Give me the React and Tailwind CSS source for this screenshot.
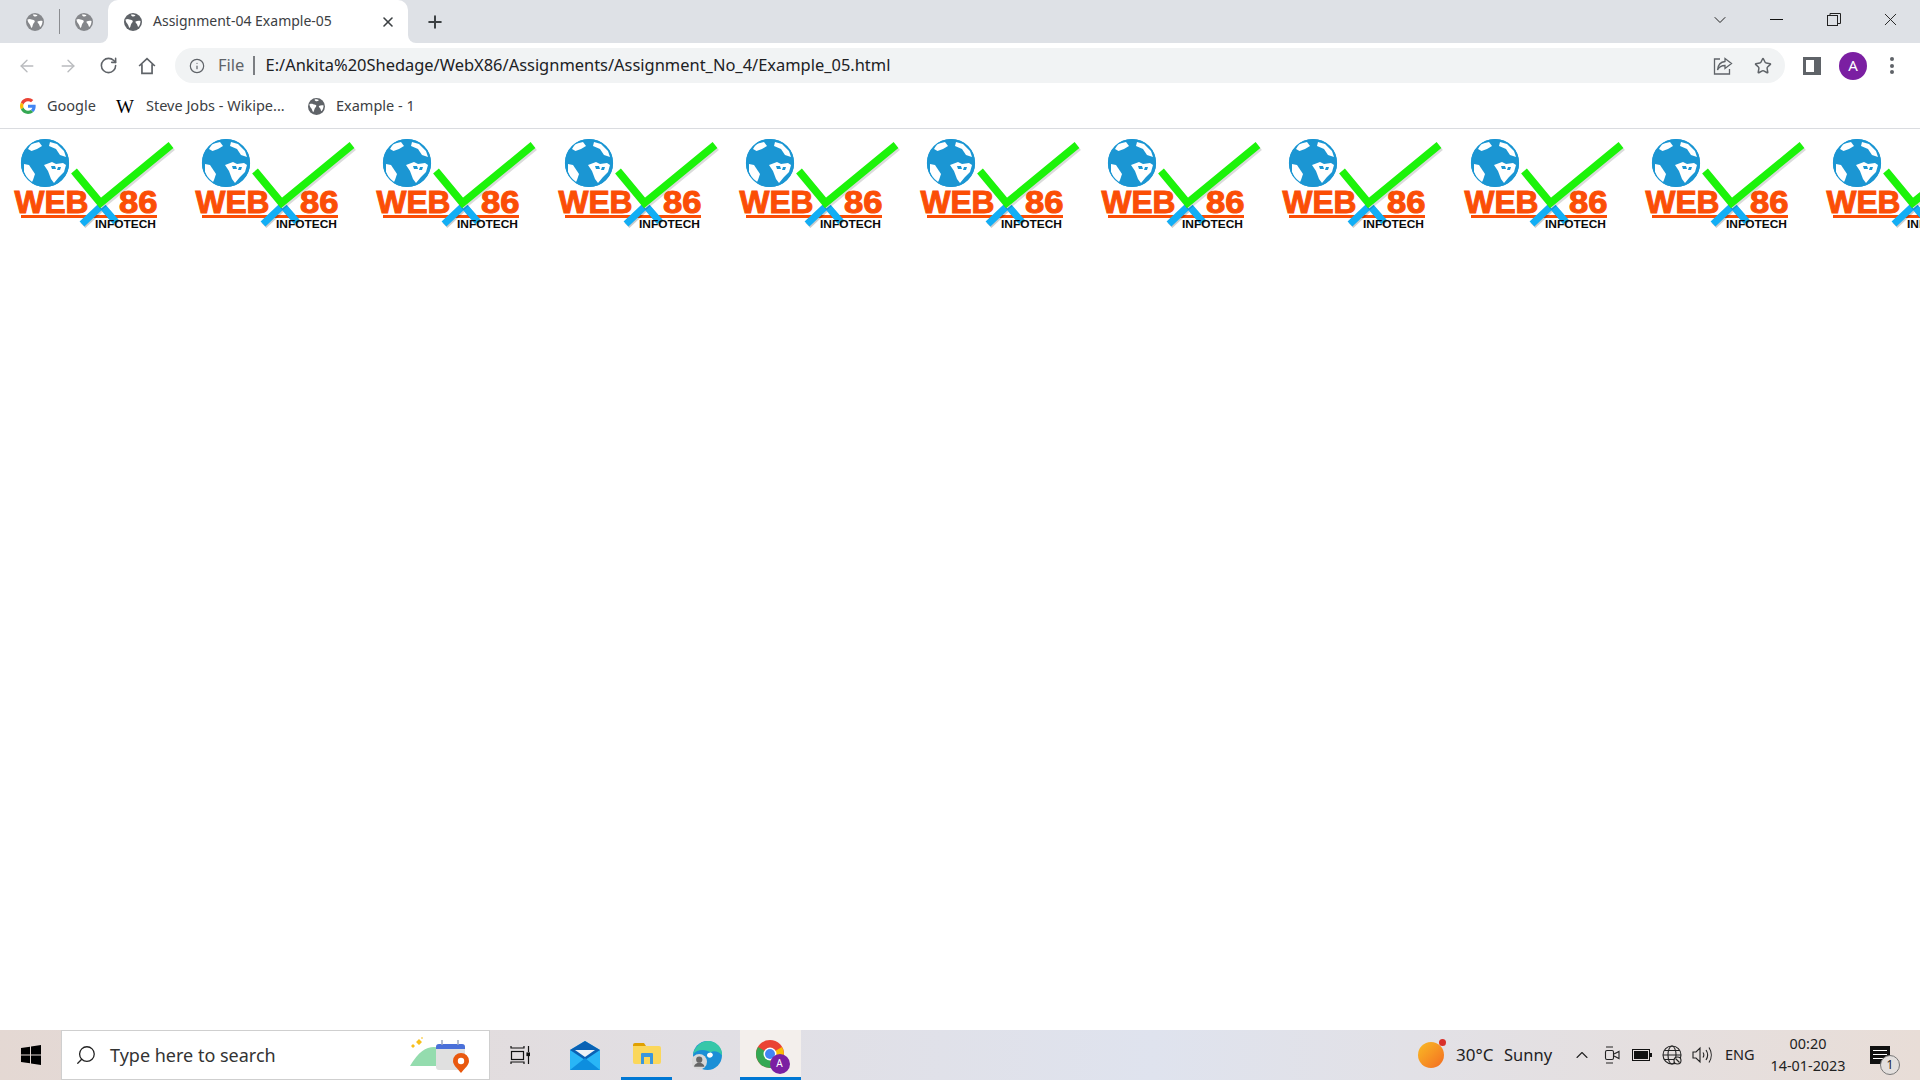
import React from "react";
import { ArrowLeft, ArrowRight, RotateCw, Info, Star, X, Plus, ChevronDown, ChevronUp, Search } from "lucide-react";

const Globe = ({ s = 18, c = "#5f6368", className = "" }) => (
  <svg width={s} height={s} viewBox="0 0 18 18" className={className}>
    <circle cx="9" cy="9" r="9" fill={c} />
    <path d="M1.500 6.500 C3 5.800 4.500 5.800 5.500 6.500 C7 7 8.500 7 8.800 8 C8.800 9.500 7.500 10 7 11.500 C6.500 13 6.300 14.500 5.500 15 C4.500 13.500 4.500 12 3.200 10.500 C2.300 9.500 1.600 8 1.500 6.500Z" fill="#fff" />
    <path d="M7 1.500 C8.500 1.200 10.500 1.500 11.500 2.500 C10.500 3.500 9 3.800 8 3.200 C7.400 2.800 7 2.200 7 1.500Z" fill="#fff" />
    <path d="M11.500 8.500 C13 7.800 15 7.500 16.500 8 C16.500 10 15.800 12.500 14.300 14 C13.600 13.500 13.500 12 13 11.200 C12.300 10.300 11.300 9.500 11.500 8.500Z" fill="#fff" />
  </svg>
);

const GoogleG = () => (
  <svg width="16" height="16" viewBox="0 0 48 48">
    <path fill="#EA4335" d="M24 9.500c3.500 0 6.700 1.300 9.100 3.500l6.800-6.800C35.800 2.400 30.200 0 24 0 14.600 0 6.500 5.400 2.600 13.200l7.900 6.200C12.400 13.700 17.700 9.500 24 9.500z" />
    <path fill="#4285F4" d="M47 24.500c0-1.600-.1-3.100-.4-4.500H24v9h13c-.6 3-2.200 5.500-4.800 7.200l7.700 6C44.400 38 47 31.800 47 24.500z" />
    <path fill="#FBBC05" d="M10.500 28.600C10 27.200 9.800 25.600 9.800 24s.3-3.200.7-4.600l-7.900-6.200C.9 16.400 0 20.100 0 24s.9 7.600 2.600 10.800l7.900-6.200z" />
    <path fill="#34A853" d="M24 48c6.500 0 11.900-2.100 15.900-5.800l-7.700-6c-2.200 1.400-4.900 2.300-8.200 2.300-6.300 0-11.600-4.200-13.500-9.900l-7.900 6.200C6.500 42.600 14.600 48 24 48z" />
  </svg>
);

const Logo = () => (
  <div className="w-[181.2px] h-[104px] shrink-0">
    <svg width="181" height="104" viewBox="0 0 181 104" className="block">
      <circle cx="45" cy="34" r="24" fill="#1b96d3" />
      <path d="M24 35 L29 36 L35 45 L33 51 L31 55 L27 50 L24 43Z" fill="#fff" />
      <path d="M31 15 L39 13 L42 17 L37 20 L31.500 22 L28 20Z" fill="#fff" />
      <path d="M44 36 L52 33 L56 35 L63 34 L66 36 L64 43 L59 48 L54 54 L51 50 L48 42Z" fill="#fff" />
      <path d="M50 13 L57 15 L64 22 L66 28 L60 26 L56 20 L49 17Z" fill="#fff" />
      <path d="M51 37 L55 37 L56 40 L52 40Z M58 38 L61 38 L60 41 L57 41Z" fill="#1b96d3" />
      <circle cx="45" cy="34" r="23.500" fill="none" stroke="#1b96d3" strokeWidth="1.200" />
      <text x="14.500" y="84" fontFamily="Liberation Sans" fontWeight="700" fontSize="31" fill="#fb4e06" stroke="#fb4e06" strokeWidth="1" textLength="74" lengthAdjust="spacingAndGlyphs">WEB</text>
      <text x="119" y="84" fontFamily="Liberation Sans" fontWeight="700" fontSize="31" fill="#fb4e06" stroke="#fb4e06" strokeWidth="1" textLength="38.500" lengthAdjust="spacingAndGlyphs">86</text>
      <rect x="21" y="86" width="136" height="3" fill="#fb4e06" />
      <path d="M82 95 L100 78 M116 93 L103 78" stroke="#000" strokeOpacity="0.2" strokeWidth="7" fill="none" transform="translate(1 1.500)" />
      <path d="M82 95 L100 78 M116 93 L103 78" stroke="#12aef5" strokeWidth="7" fill="none" />
      <path d="M74 42 L100.500 74 L171 16" stroke="#000" strokeOpacity="0.14" strokeWidth="7.500" fill="none" transform="translate(1.500 2)" />
      <path d="M74 42 L100.500 74 L171 16" stroke="#1cf30a" strokeWidth="7.500" fill="none" />
      <text x="95" y="98.500" fontFamily="Liberation Sans" fontWeight="700" fontSize="10.500" fill="#0a0a0a" textLength="61" lengthAdjust="spacingAndGlyphs">INFOTECH</text>
    </svg>
  </div>
);

const tiles = [0, 1, 2, 3, 4, 5, 6, 7, 8, 9, 10];

export default function App() {
  return (
    <div className="flex flex-col h-screen w-full overflow-hidden bg-white font-['Noto_Sans','Open_Sans',sans-serif]">
      {/* tab strip */}
      <div className="h-[43px] shrink-0 bg-[#dee1e6] flex items-center">
        <div className="w-[108px] h-full flex items-center pl-[26px]">
          <Globe c="#85878b" />
          <div className="w-px h-[25px] bg-[#8a8c90] ml-[15px] mr-[15px]" />
          <Globe c="#85878b" />
        </div>
        <div className="relative w-[300px] h-full bg-white rounded-t-[10px] flex items-center pl-[16px] pr-[12px]">
          <div className="absolute bottom-0 -left-[8px] w-[8px] h-[8px] bg-white">
            <div className="w-full h-full bg-[#dee1e6] rounded-br-[8px]" />
          </div>
          <div className="absolute bottom-0 -right-[8px] w-[8px] h-[8px] bg-white">
            <div className="w-full h-full bg-[#dee1e6] rounded-bl-[8px]" />
          </div>
          <Globe />
          <span className="ml-[11px] mb-[2px] text-[14px] text-[#3c4043] whitespace-nowrap flex-1">Assignment-04 Example-05</span>
          <X size={16} strokeWidth={2.4} color="#3c4043" />
        </div>
        <div className="ml-[17px] w-[20px] flex justify-center"><Plus size={20} strokeWidth={2.4} color="#3c4043" /></div>
        <div className="flex-1" />
        <div className="flex items-center h-full text-[#222] pb-[4px] pr-[1px]">
          <div className="w-[57px] flex justify-center"><ChevronDown size={20} strokeWidth={1.2} /></div>
          <div className="w-[57px] flex justify-center"><div className="w-[13px] h-px bg-[#111]" /></div>
          <div className="w-[57px] flex justify-center">
            <svg width="14" height="14" viewBox="0 0 14 14" fill="none" stroke="#222" strokeWidth="1"><rect x="0.500" y="2.500" width="10" height="10" /><path d="M3 2.500V0.500H13.500V10.500H10.500" /></svg>
          </div>
          <div className="w-[57px] flex justify-center"><X size={21} strokeWidth={1.1} /></div>
        </div>
      </div>
      {/* toolbar */}
      <div className="h-[44px] shrink-0 bg-white flex items-center pt-[1px]">
        <div className="w-[175px] flex items-center pl-[17px] shrink-0">
          <div className="w-[20px] flex justify-center"><ArrowLeft size={22} strokeWidth={1.6} color="#b9bbbe" /></div>
          <div className="w-[20px] ml-[21px] flex justify-center"><ArrowRight size={22} strokeWidth={1.6} color="#b9bbbe" /></div>
          <div className="w-[20px] ml-[20px] flex justify-center"><RotateCw size={19} strokeWidth={2} color="#5f6368" /></div>
          <div className="w-[20px] ml-[19px] flex justify-center">
            <svg width="18" height="18" viewBox="0 0 16 16" fill="none" stroke="#5f6368" strokeWidth="1.500"><path d="M1 8 L8 1.500 L15 8 M3.500 6.500 V14.500 H12.500 V6.500" /></svg>
          </div>
        </div>
        <div className="w-[1610px] h-[35px] shrink-0 bg-[#f1f3f4] rounded-full flex items-center pl-[14px] pr-[12px]">
          <Info size={16} strokeWidth={1.8} color="#5f6368" />
          <span className="ml-[13px] w-[26px] text-[16.500px] text-[#5f6368]">File</span>
          <div className="w-[1.500px] h-[19px] bg-[#7b7e82] ml-[9px]" />
          <span className="ml-[11px] text-[16.450px] text-[#202124] whitespace-nowrap flex-1">E:/Ankita%20Shedage/WebX86/Assignments/Assignment_No_4/Example_05.html</span>
          <div className="w-[20px] flex justify-center">
            <svg width="20" height="18" viewBox="0 0 20 18" fill="none" stroke="#5f6368" strokeWidth="1.300"><path d="M7 2 H1.500 V17 H16.500 V12" /><path d="M12 1.500 L18.500 6.500 L12 11.500 V8.500 C8.500 8.500 6 10 4.500 13 C5 8 8 4.800 12 4.500Z" /></svg>
          </div>
          <div className="w-[20px] ml-[20px] flex justify-center"><Star size={18} strokeWidth={2} color="#5f6368" /></div>
        </div>
        <div className="ml-[18px] w-[18px] h-[18px] bg-[#5f6368] flex items-center pl-[3px]">
          <div className="w-[8px] h-[12px] bg-white" />
        </div>
        <div className="ml-[18px] w-[28px] h-[28px] rounded-full bg-[#7b1fa2] flex items-center justify-center text-white text-[15px]">A</div>
        <div className="ml-[22px] w-[6px] flex flex-col gap-[2.500px] items-center">
          <div className="w-[4px] h-[4px] rounded-full bg-[#5f6368]" />
          <div className="w-[4px] h-[4px] rounded-full bg-[#5f6368]" />
          <div className="w-[4px] h-[4px] rounded-full bg-[#5f6368]" />
        </div>
      </div>
      {/* bookmarks */}
      <div className="h-[42px] shrink-0 bg-white border-b border-[#dadce0] flex items-center pl-[20px] pb-[3px] text-[14.500px] text-[#3c4043] whitespace-nowrap">
        <GoogleG />
        <span className="ml-[11px] w-[49px]">Google</span>
        <span className="ml-[20px] w-[19px] font-['Liberation_Serif'] text-[19px] leading-none text-black">W</span>
        <span className="ml-[11px] w-[141px]">Steve Jobs - Wikipe...</span>
        <Globe s={17} className="ml-[21px]" />
        <span className="ml-[11px]">Example - 1</span>
      </div>
      {/* page */}
      <div className="flex-1 min-h-0 bg-white overflow-hidden">
        <div className="flex">
          {tiles.map((i) => <Logo key={i} />)}
        </div>
      </div>
      {/* taskbar */}
      <div className="h-[50px] shrink-0 flex items-stretch bg-gradient-to-r from-[#e4d8d3] via-[#dfe3ee] via-60% to-[#e8ddd7]">
        <div className="w-[61px] flex items-center justify-center shrink-0">
          <svg width="20" height="20" viewBox="0 0 20 20" fill="#000"><path d="M0 3 L9 1.700 V9.500 H0Z M10 1.500 L20 0 V9.500 H10Z M0 10.500 H9 V18.300 L0 17Z M10 10.500 H20 V20 L10 18.500Z" /></svg>
        </div>
        <div className="w-[429px] shrink-0 bg-white border border-[#cfcfcf] flex items-center pl-[13px] pr-[19px]">
          <Search size={22} strokeWidth={1.4} color="#222" className="-scale-x-100" />
          <span className="ml-[13px] text-[18px] text-[#333] flex-1 whitespace-nowrap">Type here to search</span>
          <svg width="60" height="38" viewBox="0 0 60 38">
            <path d="M0 30 C8 16 16 11 24 11 C31 11 35 18 37 30Z" fill="#94dcae" />
            <path d="M6 6 L9 3 L12 6 L9 9Z M1 10 L3 8 L5 10 L3 12Z M11 2 L12 1 L13 2 L12 3Z" fill="#f8bf1b" />
            <rect x="26" y="8" width="29" height="26" rx="3" fill="#e0e0e0" />
            <path d="M26 13 V11 a3 3 0 0 1 3-3 H52 a3 3 0 0 1 3 3 V13Z" fill="#4a70d9" />
            <path d="M32 4 V9 M48 4 V9" stroke="#9aa7c0" strokeWidth="1.500" />
            <path d="M51 37 C47 32 43 29 43 25 a8 8 0 0 1 16 0 C59 29 55 32 51 37Z" fill="#e9590f" />
            <circle cx="51" cy="25" r="3.200" fill="#fff" />
          </svg>
        </div>
        <div className="w-[60px] flex items-center justify-center shrink-0">
          <svg width="20" height="20" viewBox="0 0 20 20" fill="none" stroke="#111" strokeWidth="1.200"><path d="M1 1 V3 H14 V1 M1 19 V17 H14 V19" /><rect x="1.500" y="6.500" width="12" height="8" /><path d="M18.500 1 V7 M18.500 11 V19" /><rect x="17" y="8" width="3" height="2.500" fill="#111" /></svg>
        </div>
        <div className="w-[71px] pr-[2px] flex items-center justify-center shrink-0">
          <svg width="30" height="29" viewBox="0 0 30 29"><path d="M0 9 L15 0 L30 9 V29 H0Z" fill="#29b6f6" /><path d="M0 9 L15 0 L30 9 L15 19Z" fill="#0a62b4" /><path d="M5 9 H25 L15 16Z" fill="#eef2f6" /><path d="M0 29 L15 17 L30 29Z" fill="#0d8ede" /></svg>
        </div>
        <div className="w-[51px] flex items-center justify-center shrink-0 border-b-[3px] border-[#0078d4]">
          <svg width="28" height="24" viewBox="0 0 28 24"><path d="M0 3 a2 2 0 0 1 2-2 H11 L13 4 H0Z" fill="#e0a000" /><path d="M0 4 H26 a2 2 0 0 1 2 2 V20 a2 2 0 0 1-2 2 H2 a2 2 0 0 1-2-2Z" fill="#fbd75b" /><path d="M8 22 V12 a1 1 0 0 1 1-1 H19 a1 1 0 0 1 1 1 V22 H17 V15 H11 V22Z" fill="#3a96dd" /></svg>
        </div>
        <div className="w-[68px] pl-[2px] flex items-center justify-center shrink-0">
          <svg width="31" height="31" viewBox="0 0 30 30">
            <circle cx="15" cy="15" r="14" fill="#1b8fd6" />
            <path d="M1 14 C3 4 12 0 17 1 C25 2 30 9 29 15 C26 11 21 10 18 12 C14 9 5 8 1 14Z" fill="#36c7a8" />
            <path d="M18 12 C22 13 20 18 16 17 C13 15 15 12 18 12Z" fill="#fff" />
            <circle cx="7" cy="21" r="7.500" fill="#d8d8d8" />
            <circle cx="7" cy="19" r="3" fill="#666" />
            <path d="M2 26 a5 4 0 0 1 10 0Z" fill="#666" />
          </svg>
        </div>
        <div className="w-[61px] bg-[#f3efec] flex items-center justify-center shrink-0 border-b-[3px] border-[#0078d4]">
          <div className="relative w-[30px] h-[30px] ml-[-2px]">
            <svg width="30" height="30" viewBox="0 0 30 30">
              <circle cx="15" cy="15" r="14" fill="#ea4335" />
              <path d="M15 15 L27 8 A14 14 0 0 1 16 29Z" fill="#fbbc05" />
              <path d="M15 15 L16 29 A14 14 0 0 1 3 8Z" fill="#34a853" />
              <circle cx="15" cy="15" r="6.500" fill="#fff" />
              <circle cx="15" cy="15" r="5" fill="#4285f4" />
            </svg>
            <div className="absolute -right-[5px] -bottom-[5px] w-[20px] h-[20px] rounded-full bg-[#7b1fa2] text-white text-[10px] flex items-center justify-center">A</div>
          </div>
        </div>
        <div className="flex-1" />
        <div className="flex items-center shrink-0 text-[#222] whitespace-nowrap">
          <div className="relative w-[26px] h-[26px] rounded-full bg-gradient-to-br from-[#f8bb25] to-[#f26a21]">
            <div className="absolute -top-[3px] -right-[2px] w-[7px] h-[7px] rounded-full bg-[#d9302a]" />
          </div>
          <span className="ml-[12px] w-[36px] text-[17px]">30°C</span>
          <span className="ml-[12px] w-[49px] text-[16.500px]">Sunny</span>
          <div className="ml-[19px] w-[20px] flex justify-center"><ChevronUp size={26} strokeWidth={1.3} /></div>
          <div className="ml-[10px] w-[20px] flex justify-center">
            <svg width="16" height="20" viewBox="0 0 16 20" fill="none" stroke="#222" strokeWidth="1.100"><rect x="1.500" y="5.500" width="8" height="9" rx="1.500" /><path d="M10 9 L15 6.500 V13.500 L10 11 M2 2 H9 M2 18 H9" /></svg>
          </div>
          <div className="ml-[10px] w-[20px] flex justify-center">
            <svg width="20" height="12" viewBox="0 0 20 12"><rect x="0.500" y="0.500" width="17" height="11" fill="none" stroke="#111" /><rect x="2" y="2" width="14" height="8" fill="#111" /><rect x="18" y="4" width="2" height="4" fill="#111" /></svg>
          </div>
          <div className="ml-[10px] w-[20px] flex justify-center">
            <svg width="20" height="20" viewBox="0 0 20 20" fill="none" stroke="#222" strokeWidth="1.100"><circle cx="10" cy="10" r="9" /><ellipse cx="10" cy="10" rx="4" ry="9" /><path d="M1 10 H19 M2.500 5.500 H17.500 M2.500 14.500 H17.500" /><circle cx="15.500" cy="15.500" r="3.500" fill="#e6e0dc" /><path d="M13.500 13.500 L17.500 17.500" /></svg>
          </div>
          <div className="ml-[10px] w-[20px] flex justify-center">
            <svg width="20" height="18" viewBox="0 0 20 18" fill="none" stroke="#222" strokeWidth="1.100"><path d="M1 6 H4 L8 2 V16 L4 12 H1Z M11 6.500 C12 8 12 10 11 11.500 M14 4 C16 7 16 11 14 14 M17 1.500 C20 6 20 12 17 16.500" /></svg>
          </div>
          <span className="ml-[13px] w-[29px] text-[14.500px]">ENG</span>
          <div className="w-[108px] flex flex-col items-center text-[14.400px] leading-[22px]">
            <span>00:20</span>
            <span>14-01-2023</span>
          </div>
          <div className="relative ml-[8px] mr-[30px] w-[20px] h-[18px] bg-[#111]">
            <div className="absolute left-[3px] top-[4px] w-[14px] h-px bg-white" />
            <div className="absolute left-[3px] top-[8px] w-[14px] h-px bg-white" />
            <div className="absolute left-[3px] top-[12px] w-[10px] h-px bg-white" />
            <div className="absolute -right-[10px] top-[9px] w-[20px] h-[20px] rounded-full border border-[#777] bg-[#e3dfdd] text-[12px] leading-[18px] text-center">1</div>
          </div>
        </div>
      </div>
    </div>
  );
}
